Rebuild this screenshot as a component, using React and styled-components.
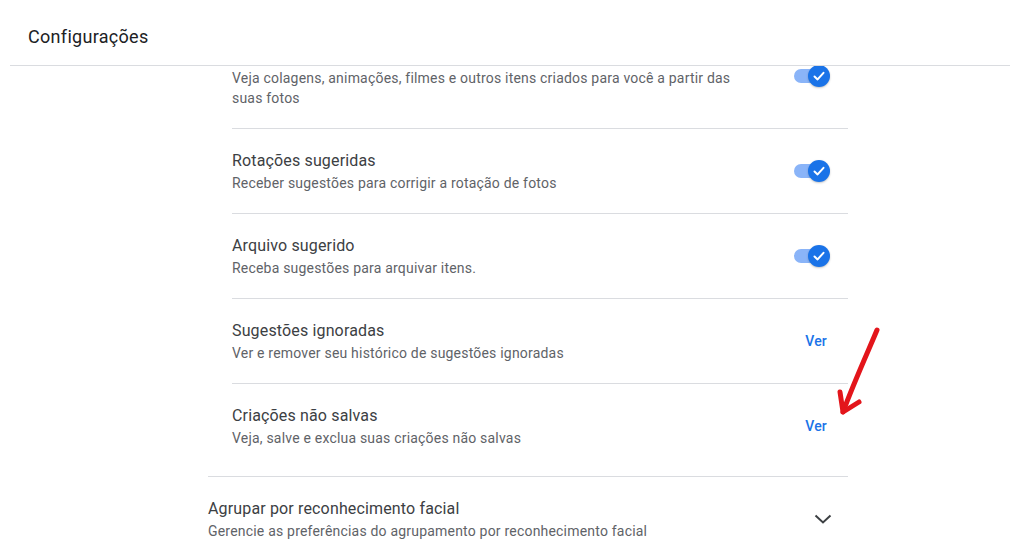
import React from 'react';
import styled, { createGlobalStyle } from 'styled-components';

const GlobalStyle = createGlobalStyle`
  html, body {
    margin: 0;
    padding: 0;
    background: #fff;
    font-family: Roboto, "Liberation Sans", Arial, sans-serif;
    overflow: hidden;
  }
`;

const Page = styled.div`
  position: relative;
  width: 1010px;
  height: 556px;
  overflow: hidden;
  display: flex;
  flex-direction: column;
`;

const Header = styled.header`
  flex: 0 0 auto;
  height: 65px;
  margin-left: 10px;
  padding-left: 18px;
  display: flex;
  align-items: center;
  border-bottom: 1px solid #dadce0;
  background: #fff;
  position: relative;
  z-index: 1;
`;

const HeaderTitle = styled.h1`
  margin: 0;
  margin-top: 7px;
  font-size: 18px;
  font-weight: 400;
  letter-spacing: 0.3px;
  color: #202124;
`;

const Body = styled.main`
  flex: 1 1 auto;
  overflow: hidden;
`;

// the list is scrolled a little: the first row sits under the header
const Scroller = styled.div`
  margin-top: -42px;
  padding-left: 208px;
  width: 640px;
`;

const Group = styled.section`
  padding-left: 24px;
  padding-bottom: 8px;
  border-bottom: 1px solid #dadce0;
`;

const Row = styled.div`
  display: flex;
  align-items: center;
  padding: 20px 18px 20px 0;
  border-bottom: ${p => (p.$last ? 'none' : '1px solid #dadce0')};
  min-height: 44px;
`;

const RowText = styled.div`
  flex: 1 1 auto;
  padding-right: 48px;
`;

const Title = styled.div`
  font-size: 16px;
  line-height: 24px;
  letter-spacing: 0.15px;
  color: #3c4043;
`;

const Desc = styled.div`
  font-size: 14px;
  line-height: 20px;
  letter-spacing: 0.2px;
  color: #5f6368;
  max-width: ${p => (p.$narrow ? '520px' : 'none')};
`;

const Control = styled.div`
  flex: 0 0 auto;
  display: flex;
  justify-content: flex-end;
  align-items: center;
`;

const Switch = styled.div`
  position: relative;
  width: 36px;
  height: 22px;
  display: flex;
  align-items: center;
`;

const Track = styled.div`
  width: 32px;
  height: 14px;
  border-radius: 7px;
  background: #8ab4f8;
`;

const Thumb = styled.div`
  position: absolute;
  right: 0;
  top: 0;
  width: 22px;
  height: 22px;
  border-radius: 50%;
  background: #1a73e8;
  box-shadow: 0 1px 2px rgba(60, 64, 67, 0.3);
  display: flex;
  align-items: center;
  justify-content: center;
`;

const LinkButton = styled.button`
  border: none;
  background: none;
  padding: 0 3px 0 0;
  font-family: inherit;
  font-size: 14px;
  font-weight: 500;
  letter-spacing: 0.2px;
  color: #1a73e8;
  cursor: pointer;
`;

const Section = styled.div`
  display: flex;
  align-items: center;
  padding: 20px 16px 20px 0;
`;

const Chevron = styled.div`
  display: flex;
`;

const Annotation = styled.svg`
  position: absolute;
  left: 830px;
  top: 322px;
  pointer-events: none;
`;

const Toggle = () => (
  <Switch>
    <Track />
    <Thumb>
      <svg width="14" height="14" viewBox="0 0 14 14">
        <polyline points="2.5,7.5 5.6,10.4 11.5,3.8" fill="none" stroke="#fff" strokeWidth="2" strokeLinecap="round" strokeLinejoin="round" />
      </svg>
    </Thumb>
  </Switch>
);

const rows = [
  {
    title: 'Criações',
    desc: 'Veja colagens, animações, filmes e outros itens criados para você a partir das suas fotos',
    narrow: true,
    control: 'toggle',
  },
  {
    title: 'Rotações sugeridas',
    desc: 'Receber sugestões para corrigir a rotação de fotos',
    control: 'toggle',
  },
  {
    title: 'Arquivo sugerido',
    desc: 'Receba sugestões para arquivar itens.',
    control: 'toggle',
  },
  {
    title: 'Sugestões ignoradas',
    desc: 'Ver e remover seu histórico de sugestões ignoradas',
    control: 'link',
  },
  {
    title: 'Criações não salvas',
    desc: 'Veja, salve e exclua suas criações não salvas',
    control: 'link',
  },
];

export default function App() {
  return (
    <>
      <GlobalStyle />
      <Page>
        <Header>
          <HeaderTitle>Configurações</HeaderTitle>
        </Header>
        <Body>
          <Scroller>
            <Group>
              {rows.map((r, i) => (
                <Row key={r.title} $last={i === rows.length - 1}>
                  <RowText>
                    <Title>{r.title}</Title>
                    <Desc $narrow={r.narrow}>{r.desc}</Desc>
                  </RowText>
                  <Control>
                    {r.control === 'toggle' ? <Toggle /> : <LinkButton>Ver</LinkButton>}
                  </Control>
                </Row>
              ))}
            </Group>
            <Section>
              <RowText>
                <Title>Agrupar por reconhecimento facial</Title>
                <Desc>Gerencie as preferências do agrupamento por reconhecimento facial</Desc>
              </RowText>
              <Chevron>
                <svg width="18" height="10" viewBox="0 0 18 10">
                  <polyline points="1.5,1.5 9,8.5 16.5,1.5" fill="none" stroke="#3c4043" strokeWidth="2" />
                </svg>
              </Chevron>
            </Section>
          </Scroller>
        </Body>
        <Annotation width="60" height="100" viewBox="0 0 60 100">
          <g fill="none" stroke="#e3151b" strokeWidth="5" strokeLinecap="round" strokeLinejoin="round">
            <path d="M47 8 C40 25 24 60 13 90" />
            <path d="M10 70 L13 90 L29 80" />
          </g>
        </Annotation>
      </Page>
    </>
  );
}
